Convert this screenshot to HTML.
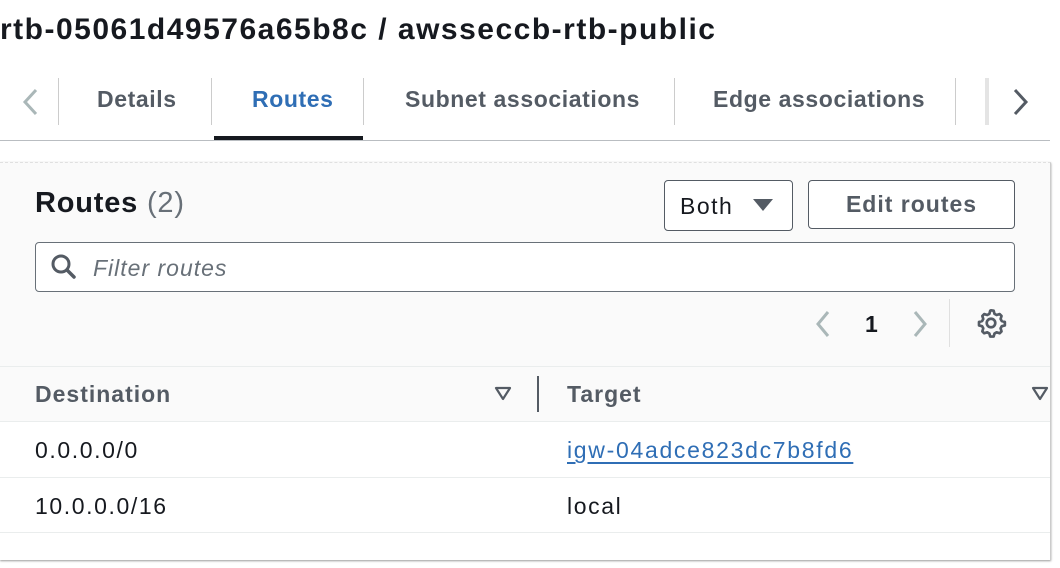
<!DOCTYPE html>
<html><head><style>
*{margin:0;padding:0;box-sizing:border-box}
body{width:1060px;height:568px;background:#fff;font-family:"Liberation Sans",sans-serif;position:relative;overflow:hidden;color:#16191f}
.a{position:absolute;white-space:nowrap}
.tab{position:absolute;top:86px;font-size:23px;font-weight:bold;color:#545b64;letter-spacing:0.6px}
.sep{position:absolute;top:78px;width:1px;height:47px;background:#ccc}
</style></head><body>
<div class="a" style="left:0;top:13px;font-size:30px;font-weight:bold;color:#16191f;letter-spacing:1.5px">rtb-05061d49576a65b8c / awsseccb-rtb-public</div>
<svg class="a" style="left:18px;top:86px" width="24" height="32"><path d="M18 4 L7 16 L18 28" fill="none" stroke="#aab7b8" stroke-width="3"/></svg>
<div class="sep" style="left:58px"></div>
<div class="tab" style="left:97px">Details</div>
<div class="sep" style="left:211px"></div>
<div class="tab" style="left:252px;color:#2f6eb5">Routes</div>
<div class="a" style="left:214px;top:136px;width:149px;height:4px;background:#16191f"></div>
<div class="sep" style="left:363px"></div>
<div class="tab" style="left:405px">Subnet associations</div>
<div class="sep" style="left:674px"></div>
<div class="tab" style="left:713px">Edge associations</div>
<div class="sep" style="left:955px"></div>
<div class="a" style="left:985px;top:78px;width:4px;height:47px;background:#e4e4e4"></div>
<svg class="a" style="left:1008px;top:86px" width="24" height="32"><path d="M7 4 L18 16 L7 28" fill="none" stroke="#545b64" stroke-width="3"/></svg>
<div class="a" style="left:0;top:140px;width:1050px;height:1px;background:#b9bdc1"></div>

<div class="a" style="left:0;top:162px;width:1051px;height:398px;background:#fafafa;border-top:1px dashed #e0e0e0;border-right:1px solid #ccc;box-shadow:0 1px 2px #999"></div>
<div class="a" style="left:35px;top:187px;font-size:29px;font-weight:bold;letter-spacing:0.8px">Routes <span style="font-weight:normal;color:#687078">(2)</span></div>
<div class="a" style="left:664px;top:180px;width:129px;height:51px;border:1px solid #545b64;border-radius:4px;background:#fff"></div>
<div class="a" style="left:680px;top:193px;font-size:23px;letter-spacing:1.5px">Both</div>
<svg class="a" style="left:751px;top:197px" width="24" height="16"><path d="M2 2 H22 L12 14 Z" fill="#545b64"/></svg>
<div class="a" style="left:808px;top:180px;width:207px;height:49px;border:1px solid #545b64;border-radius:4px;background:#fff;text-align:center;font-size:23px;font-weight:bold;color:#545b64;line-height:47px;letter-spacing:1px">Edit routes</div>
<div class="a" style="left:35px;top:242px;width:980px;height:50px;border:1px solid #687078;border-radius:4px;background:#fff"></div>
<svg class="a" style="left:50px;top:253px" width="28" height="28"><circle cx="11" cy="11" r="8" fill="none" stroke="#545b64" stroke-width="3"/><path d="M17 17 L24 24" stroke="#545b64" stroke-width="3.5" stroke-linecap="round"/></svg>
<div class="a" style="left:93px;top:255px;font-size:23px;font-style:italic;color:#687078;letter-spacing:1px">Filter routes</div>
<svg class="a" style="left:810px;top:308px" width="24" height="32"><path d="M18 4 L8 16 L18 28" fill="none" stroke="#aab7b8" stroke-width="3"/></svg>
<div class="a" style="left:865px;top:311px;font-size:23px;font-weight:bold">1</div>
<svg class="a" style="left:908px;top:308px" width="24" height="32"><path d="M7 4 L17 16 L7 28" fill="none" stroke="#aab7b8" stroke-width="3"/></svg>
<div class="a" style="left:949px;top:299px;width:1px;height:48px;background:#e0e0e0"></div>
<svg class="a" style="left:975px;top:307px" width="32" height="32" viewBox="0 0 24 24"><path d="M12 2.5l2 .3.6 2.3 1.6.9 2.3-.7 1.4 1.4-.7 2.3.9 1.6 2.3.6v2.6l-2.3.6-.9 1.6.7 2.3-1.4 1.4-2.3-.7-1.6.9-.6 2.3h-2.6l-.6-2.3-1.6-.9-2.3.7-1.4-1.4.7-2.3-.9-1.6-2.3-.6v-2.6l2.3-.6.9-1.6-.7-2.3 1.4-1.4 2.3.7 1.6-.9.6-2.3z" fill="none" stroke="#545b64" stroke-width="2" stroke-linejoin="round"/><circle cx="12" cy="12" r="3.2" fill="none" stroke="#545b64" stroke-width="2"/></svg>

<div class="a" style="left:0;top:366px;width:1050px;height:1px;background:#eaeded"></div>
<div class="a" style="left:35px;top:381px;font-size:23px;font-weight:bold;color:#545b64;letter-spacing:1px">Destination</div>
<svg class="a" style="left:494px;top:386px" width="18" height="16"><path d="M2 2 H16 L9 13 Z" fill="none" stroke="#545b64" stroke-width="2.2" stroke-linejoin="round"/></svg>
<div class="a" style="left:537px;top:376px;width:2px;height:36px;background:#545b64"></div>
<div class="a" style="left:567px;top:381px;font-size:23px;font-weight:bold;color:#545b64;letter-spacing:1px">Target</div>
<svg class="a" style="left:1031px;top:386px" width="18" height="16"><path d="M2 2 H16 L9 13 Z" fill="none" stroke="#545b64" stroke-width="2.2" stroke-linejoin="round"/></svg>
<div class="a" style="left:0;top:421px;width:1050px;height:139px;background:#fff;border-top:1px solid #eaeded"></div>
<div class="a" style="left:35px;top:437px;font-size:23px;letter-spacing:1.6px">0.0.0.0/0</div>
<div class="a" style="left:567px;top:437px;font-size:23px;color:#2f6eb5;text-decoration:underline;text-underline-offset:4px;letter-spacing:1.7px">igw-04adce823dc7b8fd6</div>
<div class="a" style="left:0;top:477px;width:1050px;height:1px;background:#eaeded"></div>
<div class="a" style="left:35px;top:493px;font-size:23px;letter-spacing:1.6px">10.0.0.0/16</div>
<div class="a" style="left:567px;top:493px;font-size:23px;letter-spacing:1.6px">local</div>
<div class="a" style="left:0;top:532px;width:1050px;height:1px;background:#eaeded"></div>
</body></html>
